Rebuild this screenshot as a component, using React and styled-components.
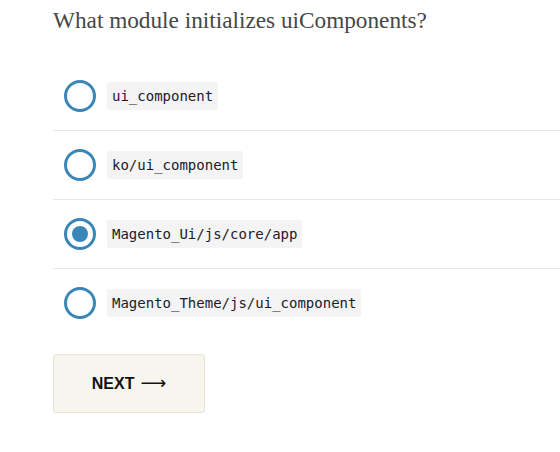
import styled, { createGlobalStyle } from 'styled-components';

const GlobalStyle = createGlobalStyle`
  body {
    margin: 0;
    background: #fff;
  }
`

const Page = styled.div`
  padding: 6px 0 0 53px;
`

const Question = styled.h2`
  margin: 0 0 28px;
  font-family: Georgia, "Liberation Serif", serif;
  font-weight: normal;
  font-size: 23.25px;
  line-height: 28px;
  color: #474747;
`

const Options = styled.div`
  display: flex;
  flex-direction: column;
`

const Option = styled.label`
  display: flex;
  align-items: center;
  gap: 11px;
  height: 68px;
  padding-left: 11px;
  border-bottom: ${props => props.$last ? 'none' : '1px solid #e6e6e6'};
  cursor: pointer;
`

const Radio = styled.span`
  box-sizing: border-box;
  width: 32px;
  height: 32px;
  border-radius: 50%;
  border: 3px solid #3a86b7;
  display: flex;
  align-items: center;
  justify-content: center;
  flex-shrink: 0;

  &::after {
    content: '';
    width: 16px;
    height: 16px;
    border-radius: 50%;
    background: #3a86b7;
    display: ${props => props.$checked ? 'block' : 'none'};
  }
`

const Code = styled.code`
  font-family: Consolas, "DejaVu Sans Mono", "Liberation Mono", monospace;
  font-size: 14px;
  line-height: 28px;
  padding: 0 5px;
  background: #f4f4f4;
  border-radius: 2px;
  color: #1a1a2a;
`

const NextButton = styled.button`
  margin-top: 17px;
  width: 152px;
  height: 59px;
  background: #f6f5ee;
  border: 1px solid #e8e4cf;
  border-radius: 3px;
  font-family: "Liberation Sans", Arial, sans-serif;
  font-weight: bold;
  font-size: 16px;
  color: #111;
  display: flex;
  align-items: center;
  justify-content: center;
  gap: 6px;
  cursor: pointer;
`

const Arrow = styled.span`
  font-family: "DejaVu Sans", sans-serif;
  font-weight: normal;
  font-size: 18px;
  transform: translateY(-1px);
`

const options = [
  'ui_component',
  'ko/ui_component',
  'Magento_Ui/js/core/app',
  'Magento_Theme/js/ui_component',
]

function App() {
  return (
    <Page>
      <GlobalStyle />
      <Question>What module initializes uiComponents?</Question>
      <Options>
        {options.map((opt, i) => (
          <Option key={opt} $last={i === options.length - 1}>
            <Radio $checked={i === 2} />
            <Code>{opt}</Code>
          </Option>
        ))}
      </Options>
      <NextButton>NEXT <Arrow>⟶</Arrow></NextButton>
    </Page>
  )
}

export default App;
